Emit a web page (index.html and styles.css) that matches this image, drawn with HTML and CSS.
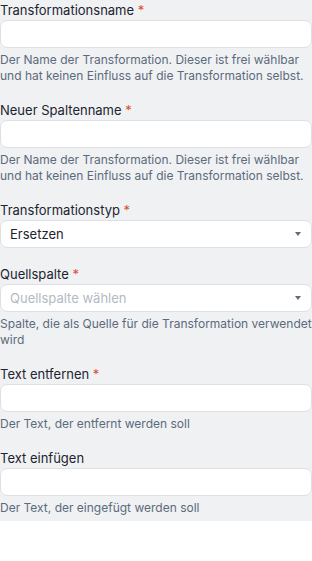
FILE: index.html
```html
<!DOCTYPE html>
<html lang="de">
<head>
  <meta charset="UTF-8">
  <meta name="viewport" content="width=device-width, initial-scale=1.0">
  <title>Transformation</title>
  <link rel="stylesheet" href="styles.css">
</head>
<body>

<div class="form">
  <div class="field">
    <label class="label">Transformationsname <span class="req">*</span></label>
    <input type="text" class="input">
    <p class="help">Der Name der Transformation. Dieser ist frei wählbar und hat keinen Einfluss auf die Transformation selbst.</p>
  </div>

  <div class="field">
    <label class="label">Neuer Spaltenname <span class="req">*</span></label>
    <input type="text" class="input">
    <p class="help">Der Name der Transformation. Dieser ist frei wählbar und hat keinen Einfluss auf die Transformation selbst.</p>
  </div>

  <div class="field">
    <label class="label">Transformationstyp <span class="req">*</span></label>
    <div class="select">
      <span class="value">Ersetzen</span>
      <span class="caret"></span>
    </div>
  </div>

  <div class="field">
    <label class="label">Quellspalte <span class="req">*</span></label>
    <div class="select">
      <span class="value placeholder">Quellspalte wählen</span>
      <span class="caret"></span>
    </div>
    <p class="help">Spalte, die als Quelle für die Transformation verwendet wird</p>
  </div>

  <div class="field">
    <label class="label">Text entfernen <span class="req">*</span></label>
    <input type="text" class="input">
    <p class="help">Der Text, der entfernt werden soll</p>
  </div>

  <div class="field">
    <label class="label">Text einfügen</label>
    <input type="text" class="input">
    <p class="help">Der Text, der eingefügt werden soll</p>
  </div>
</div>

</body>
</html>
```

FILE: styles.css
```css
* {
  margin: 0;
  padding: 0;
  box-sizing: border-box;
}

body {
  font-family: Inter, "Noto Sans", sans-serif;
  background: #ffffff;
}

.form {
  background: #f0f1f3;
  display: flex;
  flex-direction: column;
  gap: 16px;
  padding-bottom: 5px;
}

.field {
  display: flex;
  flex-direction: column;
}

.label {
  font-size: 13px;
  line-height: 20px;
  color: #1c2430;
}

.req {
  color: #d9502c;
}

.input, .select {
  width: 100%;
  height: 28px;
  background: #ffffff;
  border: 1px solid #dcdfe4;
  border-radius: 7px;
  font-family: inherit;
  font-size: 13px;
  outline: none;
}

.select {
  display: flex;
  align-items: center;
  justify-content: space-between;
  padding: 0 9px;
}

.value {
  color: #1c2430;
}

.placeholder {
  color: #b3bac3;
}

.caret {
  width: 0;
  height: 0;
  border-left: 3.5px solid transparent;
  border-right: 3.5px solid transparent;
  border-top: 4px solid #5b6b7b;
  margin-right: 1px;
}

.help {
  font-size: 12px;
  line-height: 16px;
  color: #5b6b7c;
  margin-top: 4px;
}
```
